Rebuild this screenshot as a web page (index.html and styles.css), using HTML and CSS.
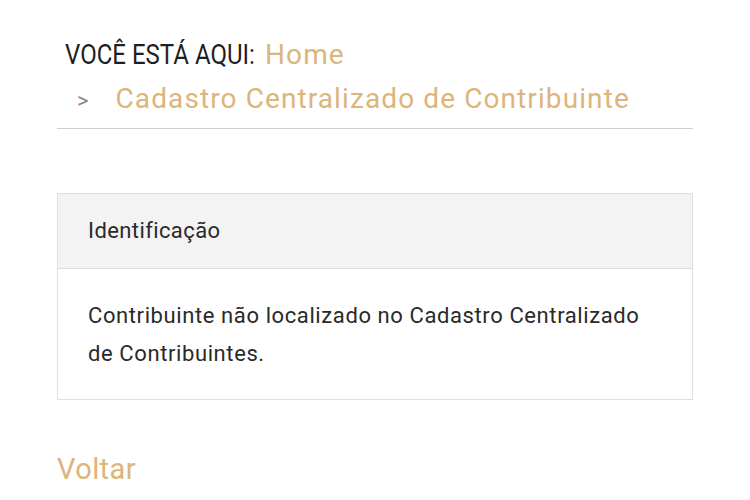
FILE: index.html
```html
<!DOCTYPE html>
<html lang="pt-BR">
<head>
  <meta charset="UTF-8">
  <meta name="viewport" content="width=device-width, initial-scale=1.0">
  <title>Cadastro Centralizado de Contribuinte</title>
  <link rel="stylesheet" href="styles.css">
</head>
<body>
  <div class="container">
    <div class="breadcrumb">
      <div class="crumb-line">
        <span class="label">VOCÊ ESTÁ AQUI:</span>
        <a href="#" class="link">Home</a>
      </div>
      <div class="crumb-line sub">
        <span class="sep">&gt;</span>
        <a href="#" class="link">Cadastro Centralizado de Contribuinte</a>
      </div>
    </div>

    <div class="card">
      <div class="card-header">Identificação</div>
      <div class="card-body">
        Contribuinte não localizado no Cadastro Centralizado de Contribuintes.
      </div>
    </div>

    <a href="#" class="back">Voltar</a>
  </div>
</body>
</html>
```

FILE: styles.css
```css
body {
  margin: 0;
  font-family: Roboto, "Noto Sans", Arial, sans-serif;
  background: #fff;
  color: #222;
}
.container {
  width: 636px;
  padding: 38px 0 0 57px;
}
.breadcrumb {
  border-bottom: 1px solid #cfcfcf;
  padding-bottom: 10px;
}
.crumb-line {
  display: flex;
  align-items: baseline;
  height: 36px;
}
.label {
  display: inline-block;
  font-size: 27px;
  color: #1f1f1f;
  transform: scaleX(0.89);
  transform-origin: left;
  margin-left: 8px;
  width: 200px;
  white-space: nowrap;
}
.link {
  color: #dcb57a;
  text-decoration: none;
  font-size: 28px;
  letter-spacing: 1.1px;
}
.sub {
  margin-top: 8px;
}
.sep {
  color: #888;
  font-size: 22px;
  margin: 0 27px 0 20px;
}
.card {
  margin-top: 64px;
  border: 1px solid #e0e0e0;
}
.card-header {
  background: #f3f3f3;
  border-bottom: 1px solid #dcdcdc;
  height: 74px;
  line-height: 74px;
  padding: 0 30px;
  font-size: 22px;
  letter-spacing: 0.4px;
  color: #2a2a2a;
}
.card-body {
  padding: 28px 50px 26px 30px;
  font-size: 22px;
  letter-spacing: 0.6px;
  line-height: 38px;
  color: #2a2a2a;
}
.back {
  display: inline-block;
  margin-top: 52px;
  font-size: 29px;
  letter-spacing: 0.4px;
  color: #dcb57a;
  text-decoration: none;
}
```
